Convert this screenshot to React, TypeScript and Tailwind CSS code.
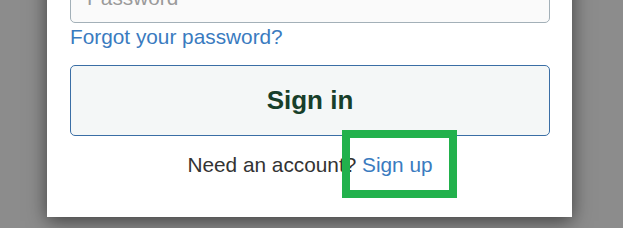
import React from "react";

export default function App() {
  return (
    <div
      className="relative w-[623px] h-[228px] overflow-hidden bg-[#8c8c8c]"
      style={{ fontFamily: '"Liberation Sans", Arial, sans-serif' }}
    >
      <div className="ml-[47px] -mt-[27px] w-[525px] bg-white pl-[23px] pr-[22px] pb-[40px] pt-0 shadow-[0_4px_18px_rgba(0,0,0,0.55)]">
        <div className="flex h-[50px] items-center rounded-[5px] border border-[#a3b0b8] bg-[#fafafa] px-4 text-[20.8px] text-[#9a9a9a]">
          Password
        </div>
        <a className="mt-[2px] block text-[20.8px] leading-[24px] text-[#3a7bbf]">
          Forgot your password?
        </a>
        <button className="mt-[16px] flex h-[71px] w-full items-center justify-center rounded-[5px] border border-[#3a6ea5] bg-[#f4f7f7] text-[26px] font-bold text-[#173f2a]">
          Sign in
        </button>
        <p className="mt-[17px] text-center text-[20.8px] leading-[24px] text-[#333333]">
          Need an account? <a className="text-[#3a7bbf]">Sign up</a>
        </p>
      </div>
      <div className="absolute left-[342px] top-[130px] h-[68px] w-[115px] border-[8px] border-[#22b14c]" />
    </div>
  );
}
